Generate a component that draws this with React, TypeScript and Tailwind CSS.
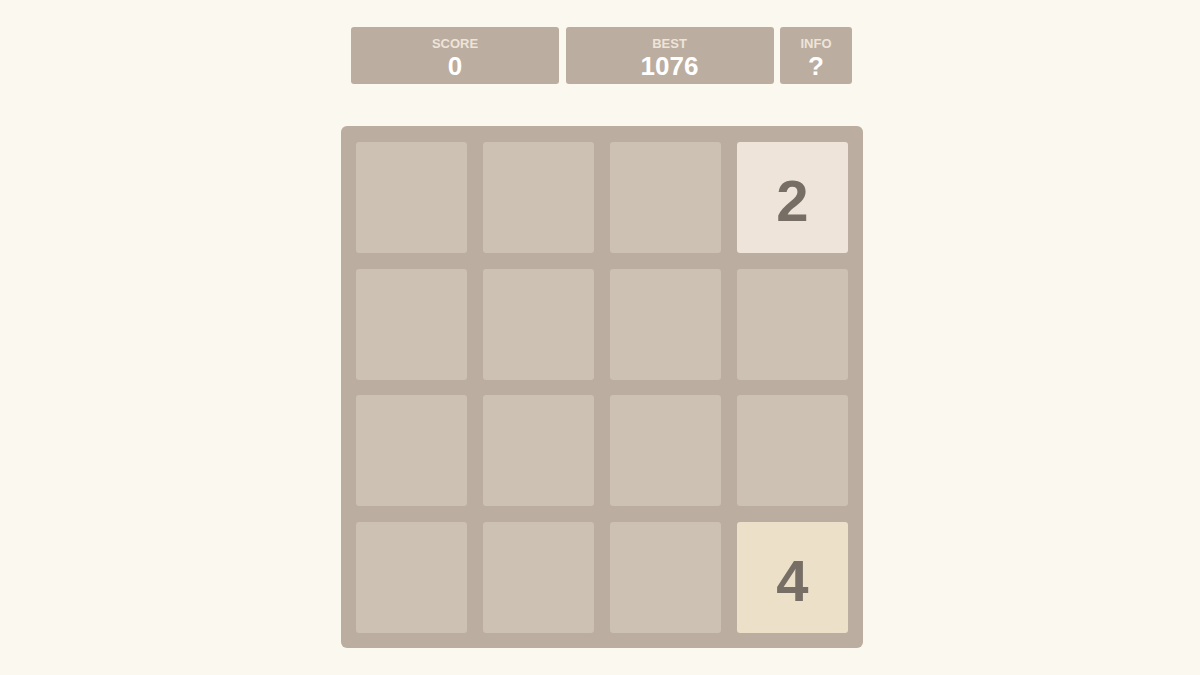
import React from "react";

const tiles: (number | null)[] = [
  null, null, null, 2,
  null, null, null, null,
  null, null, null, null,
  null, null, null, 4,
];

function Tile({ v }: { v: number | null }) {
  if (v === null) return <div className="w-[111px] h-[111px] rounded-[3px] bg-[#cdc1b4]" />;
  const bg = v === 2 ? "bg-[#eee4da]" : "bg-[#ede0c8]";
  return (
    <div className={`w-[111px] h-[111px] rounded-[3px] ${bg} flex items-center justify-center pt-[7px] text-[#776e65] font-bold text-[58px] leading-none`}>
      {v}
    </div>
  );
}

function Box({ label, value, w }: { label: string; value: string; w: string }) {
  return (
    <div className={`${w} h-[57px] rounded-[3px] bg-[#bbada0] flex flex-col items-center pt-[10px]`}>
      <div className="text-[#eee4da] text-[13px] font-bold leading-[14px] uppercase">{label}</div>
      <div className="mt-[4px] text-white text-[26px] font-bold leading-[22px]">{value}</div>
    </div>
  );
}

export default function App() {
  return (
    <div
      className="w-[1200px] h-[675px] bg-[#faf8ef] flex flex-col items-center"
      style={{ fontFamily: '"Liberation Sans", Arial, sans-serif' }}
    >
      <div className="mt-[27px] flex gap-[6.5px] ml-[3px]">
        <Box label="Score" value="0" w="w-[208px]" />
        <Box label="Best" value="1076" w="w-[208px]" />
        <Box label="Info" value="?" w="w-[72px]" />
      </div>
      <div className="mt-[42px] ml-[4px] w-[522px] h-[522px] rounded-[6px] bg-[#bbada0] pt-[16px] pl-[15px] pr-[15px] pb-[15px] grid grid-cols-4 gap-x-[16px] gap-y-[15px]">
        {tiles.map((v, i) => (
          <Tile key={i} v={v} />
        ))}
      </div>
    </div>
  );
}
